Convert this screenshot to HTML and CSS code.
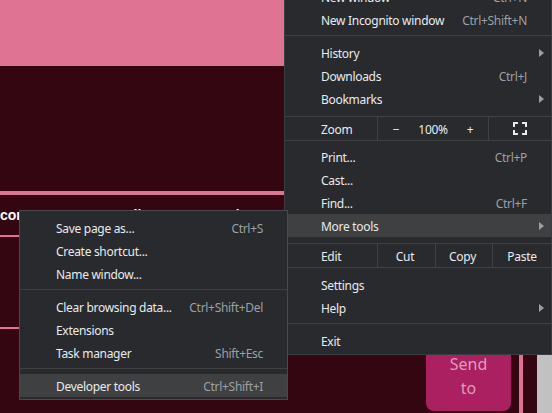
FILE: index.html
```html
<!DOCTYPE html>
<html>
<head>
<meta charset="utf-8">
<link rel="stylesheet" href="styles.css">
</head>
<body>
<div class="page">
  <div class="main">
    <header class="hero"></header>
    <section class="content">
      <div class="rule-thick"></div>
      <div class="title-row">
        <span class="t1">correo</span>
        <span class="t2">llenar</span>
        <span class="t3">de</span>
      </div>
      <div class="field"></div>
      <div class="action-row">
        <button class="send">Send<br>to</button>
        <div class="strip"></div>
      </div>
    </section>
  </div>
  <div class="scrollbar"></div>
</div>

<div class="menu main-menu">
  <div class="item"><span class="label">New window</span><span class="sc">Ctrl+N</span></div>
  <div class="item"><span class="label">New Incognito window</span><span class="sc">Ctrl+Shift+N</span></div>
  <div class="sep"></div>
  <div class="item"><span class="label">History</span><svg class="arrow" width="5" height="8" viewBox="0 0 5 8"><polygon points="0,0 5,4 0,8" fill="#9aa0a6"/></svg></div>
  <div class="item"><span class="label">Downloads</span><span class="sc">Ctrl+J</span></div>
  <div class="item"><span class="label">Bookmarks</span><svg class="arrow" width="5" height="8" viewBox="0 0 5 8"><polygon points="0,0 5,4 0,8" fill="#9aa0a6"/></svg></div>
  <div class="split-row zoom-row">
    <div class="cell cell-label">Zoom</div>
    <div class="cell zoom-ctrls"><span>−</span><span>100%</span><span>+</span></div>
    <div class="cell cell-fs">
      <svg width="14" height="13" viewBox="0 0 14 13" fill="none" stroke="#e8eaed" stroke-width="2">
        <path d="M1 5V1H5M9 1H13V5M13 8V12H9M5 12H1V8"/>
      </svg>
    </div>
  </div>
  <div class="item"><span class="label">Print...</span><span class="sc">Ctrl+P</span></div>
  <div class="item"><span class="label">Cast...</span></div>
  <div class="item"><span class="label">Find...</span><span class="sc">Ctrl+F</span></div>
  <div class="item active"><span class="label">More tools</span><svg class="arrow" width="5" height="8" viewBox="0 0 5 8"><polygon points="0,0 5,4 0,8" fill="#9aa0a6"/></svg></div>
  <div class="split-row edit-row">
    <div class="cell cell-label">Edit</div>
    <div class="cell cell-cut">Cut</div>
    <div class="cell cell-copy">Copy</div>
    <div class="cell cell-paste">Paste</div>
  </div>
  <div class="item"><span class="label">Settings</span></div>
  <div class="item"><span class="label">Help</span><svg class="arrow" width="5" height="8" viewBox="0 0 5 8"><polygon points="0,0 5,4 0,8" fill="#9aa0a6"/></svg></div>
  <div class="sep"></div>
  <div class="item"><span class="label">Exit</span></div>
</div>

<div class="menu sub-menu">
  <div class="item"><span class="label">Save page as...</span><span class="sc">Ctrl+S</span></div>
  <div class="item"><span class="label">Create shortcut...</span></div>
  <div class="item"><span class="label">Name window...</span></div>
  <div class="sep"></div>
  <div class="item"><span class="label">Clear browsing data...</span><span class="sc">Ctrl+Shift+Del</span></div>
  <div class="item"><span class="label">Extensions</span></div>
  <div class="item"><span class="label">Task manager</span><span class="sc">Shift+Esc</span></div>
  <div class="sep"></div>
  <div class="item active"><span class="label">Developer tools</span><span class="sc">Ctrl+Shift+I</span></div>
</div>
</body>
</html>
```

FILE: styles.css
```css
html, body {
  margin: 0;
  padding: 0;
  width: 552px;
  height: 413px;
  overflow: hidden;
  background: #330612;
}

.page {
  display: flex;
  width: 552px;
  height: 413px;
}

.main {
  flex: 0 0 537px;
  display: flex;
  flex-direction: column;
  background: #330612;
}

.hero {
  height: 66px;
  background: #de7393;
}

.content {
  flex: 1;
  display: flex;
  flex-direction: column;
  padding-top: 125px;
}

.rule-thick {
  height: 4px;
  background: #de7393;
}

.title-row {
  display: flex;
  height: 40px;
  padding-top: 12px;
  box-sizing: border-box;
  font-family: "Liberation Sans", Arial, sans-serif;
  font-weight: bold;
  font-size: 14px;
  line-height: 16px;
  color: #ffffff;
}

.t2 { margin-left: 90px; }
.t3 { margin-left: 60px; }

.field {
  height: 90px;
  border-top: 2px solid #de7393;
  border-bottom: 2px solid #de7393;
  margin-right: 20px;
}

.action-row {
  flex: 1;
  display: flex;
  justify-content: flex-end;
  padding-top: 6px;
  padding-right: 14px;
}

.send {
  width: 85px;
  margin: 0 8px 2px 0;
  border: none;
  border-radius: 8px;
  background: #aa2060;
  color: #df9bbb;
  font-family: "Noto Sans", sans-serif;
  font-size: 16px;
  line-height: 24px;
  padding: 5px 0 0;
}

.strip {
  width: 4px;
  background: #de7393;
}

.scrollbar {
  flex: 0 0 15px;
  background: #c1c1c1;
}

/* Menus */
.menu {
  position: absolute;
  box-sizing: border-box;
  background: #292a2d;
  border: 1px solid #3c3d40;
  font-family: "Noto Sans", sans-serif;
  font-size: 12px;
  letter-spacing: -0.3px;
  color: #e8eaed;
}

.main-menu {
  left: 284px;
  top: -20px;
  width: 268px;
  padding: 4px 0 2px;
}

.sub-menu {
  left: 19px;
  top: 210px;
  width: 269px;
  padding: 5px 0 2px;
  border-color: #48494c;
}

.item {
  display: flex;
  align-items: center;
  box-sizing: border-box;
  height: 23px;
  padding: 1px 24px 0 36px;
  white-space: nowrap;
}

.item .label {
  flex: 1;
}

.item .sc {
  color: #9aa0a6;
}

.item .arrow {
  margin-right: -17px;
}

.item.active {
  background: #3f4042;
}

.sep {
  height: 1px;
  background: #3f4042;
  margin: 4px 0 5px;
}

.split-row {
  display: flex;
  height: 23px;
  border-top: 1px solid #3f4042;
  border-bottom: 1px solid #3f4042;
}

.zoom-row {
  margin: 6px 0 4px;
}

.edit-row {
  margin: 6px 0 5px;
}

.cell {
  display: flex;
  align-items: center;
  justify-content: center;
  padding-top: 1px;
  box-sizing: border-box;
  border-left: 1px solid #3f4042;
}

.cell-label {
  justify-content: flex-start;
  border-left: none;
  width: 92px;
  padding-left: 36px;
}

.zoom-ctrls {
  width: 111px;
  display: grid;
  grid-template-columns: 37px 37px 37px;
  justify-items: center;
}

.cell-fs {
  flex: 1;
  padding-top: 0;
}

.cell-cut { width: 58px; padding-right: 3px; }
.cell-copy { width: 57px; padding-right: 3px; }
.cell-paste { flex: 1; }
```
